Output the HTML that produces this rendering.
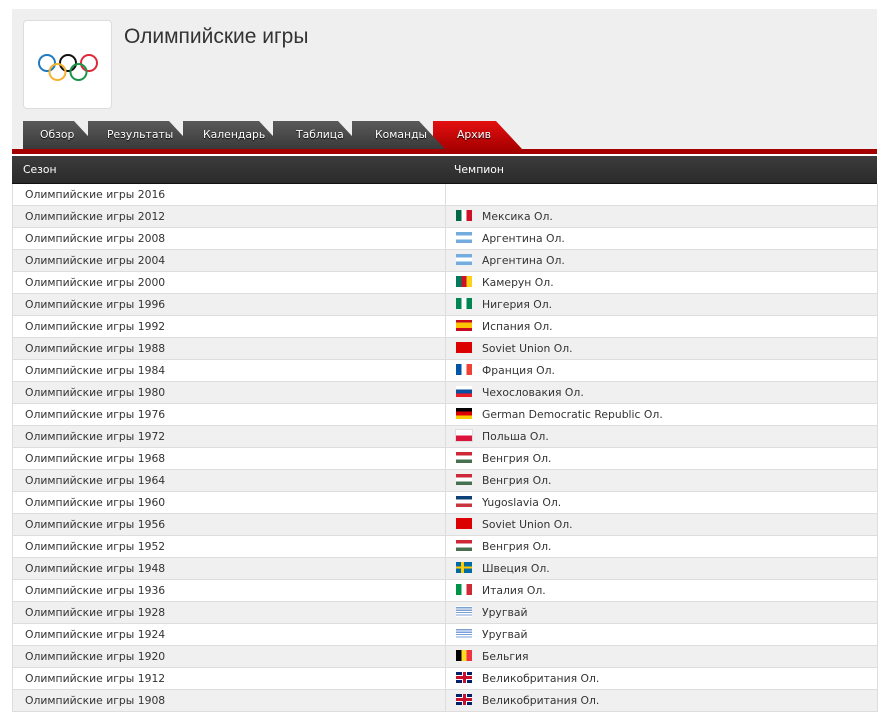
<!DOCTYPE html>
<html><head><meta charset="utf-8"><style>
body{margin:0;background:#fff;font-family:"DejaVu Sans","Liberation Sans",sans-serif;}
#top{position:absolute;left:12px;top:9px;width:865px;height:141px;background:#efefef;}
#logo{position:absolute;left:11px;top:11px;width:87px;height:87px;background:#fff;border:1px solid #ddd;border-radius:4px;}
#title{position:absolute;left:112px;top:16px;font-family:"Liberation Sans",sans-serif;font-size:21px;color:#333;}
.tab{position:absolute;top:112px;height:28px;background:linear-gradient(#5a5a5a,#3a3a3a);clip-path:polygon(0 0,calc(100% - 26px) 0,100% 100%,0 100%);color:#fff;font-size:10.8px;line-height:28px;text-shadow:0 1px 1px #000;}
.tab span{position:absolute;top:0}
#redbar{position:absolute;left:12px;top:149px;width:865px;height:5px;background:#a50000;}
#head{position:absolute;left:12px;top:156px;width:865px;height:27px;background:linear-gradient(#3c3c3c,#2a2a2a);border-bottom:1px solid #111;color:#fff;font-size:10.8px;line-height:27px;}
table{position:absolute;left:12px;top:184px;width:866px;border-collapse:collapse;font-size:10.8px;color:#333;}
td{height:21px;border-bottom:1px solid #ddd;padding:0;}
td:first-child{width:420px;padding-left:12px;border-left:1px solid #ddd;border-right:1px solid #ddd}
td:last-child{padding-left:10px;border-right:1px solid #ddd}
tr:nth-child(even){background:#f0f0f0}
.f{display:inline-block;width:16px;height:11px;vertical-align:-1px;margin-right:10px}
</style></head><body>
<div id="top">
<div id="logo"><svg width="87" height="87" viewBox="0 0 87 87"><g fill="none" stroke-width="2"><circle cx="23" cy="42" r="8" stroke="#1f7ac0"/><circle cx="44" cy="42" r="8" stroke="#111"/><circle cx="65" cy="42" r="8" stroke="#e0283a"/><circle cx="33.5" cy="51" r="8" stroke="#f4b431"/><circle cx="54.5" cy="51" r="8" stroke="#1a9548"/></g></svg></div>
<div id="title">Олимпийские игры</div>
<div class="tab" style="left:421px;width:89px;background:linear-gradient(#e41010,#a80000)"><span style="left:24px">Архив</span></div>
<div class="tab" style="left:340px;width:93px"><span style="left:23px">Команды</span></div>
<div class="tab" style="left:261px;width:91px"><span style="left:23px">Таблица</span></div>
<div class="tab" style="left:171px;width:102px"><span style="left:20px">Календарь</span></div>
<div class="tab" style="left:76px;width:107px"><span style="left:19px">Результаты</span></div>
<div class="tab" style="left:11px;width:77px"><span style="left:17px">Обзор</span></div>
</div>
<div id="redbar"></div>
<div id="head"><span style="position:absolute;left:11px">Сезон</span><span style="position:absolute;left:442px">Чемпион</span></div>
<table>
<tr><td>Олимпийские игры 2016</td><td></td></tr>
<tr><td>Олимпийские игры 2012</td><td><i class="f" style="background:linear-gradient(90deg,#006847 33%,#fff 33% 66%,#ce1126 66%)"></i>Мексика Ол.</td></tr>
<tr><td>Олимпийские игры 2008</td><td><i class="f" style="background:linear-gradient(#74acdf 33%,#fff 33% 66%,#74acdf 66%)"></i>Аргентина Ол.</td></tr>
<tr><td>Олимпийские игры 2004</td><td><i class="f" style="background:linear-gradient(#74acdf 33%,#fff 33% 66%,#74acdf 66%)"></i>Аргентина Ол.</td></tr>
<tr><td>Олимпийские игры 2000</td><td><i class="f" style="background:linear-gradient(90deg,#007a5e 33%,#ce1126 33% 66%,#fcd116 66%)"></i>Камерун Ол.</td></tr>
<tr><td>Олимпийские игры 1996</td><td><i class="f" style="background:linear-gradient(90deg,#008751 33%,#fff 33% 66%,#008751 66%)"></i>Нигерия Ол.</td></tr>
<tr><td>Олимпийские игры 1992</td><td><i class="f" style="background:linear-gradient(#c60b1e 25%,#ffc400 25% 75%,#c60b1e 75%)"></i>Испания Ол.</td></tr>
<tr><td>Олимпийские игры 1988</td><td><i class="f" style="background:#d00"></i>Soviet Union Ол.</td></tr>
<tr><td>Олимпийские игры 1984</td><td><i class="f" style="background:linear-gradient(90deg,#0055a4 33%,#fff 33% 66%,#ef4135 66%)"></i>Франция Ол.</td></tr>
<tr><td>Олимпийские игры 1980</td><td><i class="f" style="background:linear-gradient(#fff 33%,#0b4ea2 33% 66%,#ee1c25 66%)"></i>Чехословакия Ол.</td></tr>
<tr><td>Олимпийские игры 1976</td><td><i class="f" style="background:linear-gradient(#000 33%,#d00 33% 66%,#ffce00 66%)"></i>German Democratic Republic Ол.</td></tr>
<tr><td>Олимпийские игры 1972</td><td><i class="f" style="background:linear-gradient(#fff 50%,#dc143c 50%);outline:1px solid #ddd"></i>Польша Ол.</td></tr>
<tr><td>Олимпийские игры 1968</td><td><i class="f" style="background:linear-gradient(#ce2939 33%,#fff 33% 66%,#477050 66%)"></i>Венгрия Ол.</td></tr>
<tr><td>Олимпийские игры 1964</td><td><i class="f" style="background:linear-gradient(#ce2939 33%,#fff 33% 66%,#477050 66%)"></i>Венгрия Ол.</td></tr>
<tr><td>Олимпийские игры 1960</td><td><i class="f" style="background:linear-gradient(#0c4076 33%,#fff 33% 66%,#c6363c 66%)"></i>Yugoslavia Ол.</td></tr>
<tr><td>Олимпийские игры 1956</td><td><i class="f" style="background:#d00"></i>Soviet Union Ол.</td></tr>
<tr><td>Олимпийские игры 1952</td><td><i class="f" style="background:linear-gradient(#ce2939 33%,#fff 33% 66%,#477050 66%)"></i>Венгрия Ол.</td></tr>
<tr><td>Олимпийские игры 1948</td><td><i class="f" style="background:linear-gradient(90deg,transparent 31%,#fecc00 31% 50%,transparent 50%),linear-gradient(#006aa7 40%,#fecc00 40% 60%,#006aa7 60%)"></i>Швеция Ол.</td></tr>
<tr><td>Олимпийские игры 1936</td><td><i class="f" style="background:linear-gradient(90deg,#009246 33%,#fff 33% 66%,#ce2b37 66%)"></i>Италия Ол.</td></tr>
<tr><td>Олимпийские игры 1928</td><td><i class="f" style="background:repeating-linear-gradient(#fff 0 1.2px,#7b9fd6 1.2px 2.4px)"></i>Уругвай</td></tr>
<tr><td>Олимпийские игры 1924</td><td><i class="f" style="background:repeating-linear-gradient(#fff 0 1.2px,#7b9fd6 1.2px 2.4px)"></i>Уругвай</td></tr>
<tr><td>Олимпийские игры 1920</td><td><i class="f" style="background:linear-gradient(90deg,#000 33%,#fdda24 33% 66%,#ef3340 66%)"></i>Бельгия</td></tr>
<tr><td>Олимпийские игры 1912</td><td><i class="f" style="background:linear-gradient(#c8102e,#c8102e) center/16px 3px no-repeat,linear-gradient(#c8102e,#c8102e) center/3px 11px no-repeat,linear-gradient(#fff,#fff) center/16px 5px no-repeat,linear-gradient(#fff,#fff) center/5px 11px no-repeat,#012169"></i>Великобритания Ол.</td></tr>
<tr><td>Олимпийские игры 1908</td><td><i class="f" style="background:linear-gradient(#c8102e,#c8102e) center/16px 3px no-repeat,linear-gradient(#c8102e,#c8102e) center/3px 11px no-repeat,linear-gradient(#fff,#fff) center/16px 5px no-repeat,linear-gradient(#fff,#fff) center/5px 11px no-repeat,#012169"></i>Великобритания Ол.</td></tr>
</table>
</body></html>
